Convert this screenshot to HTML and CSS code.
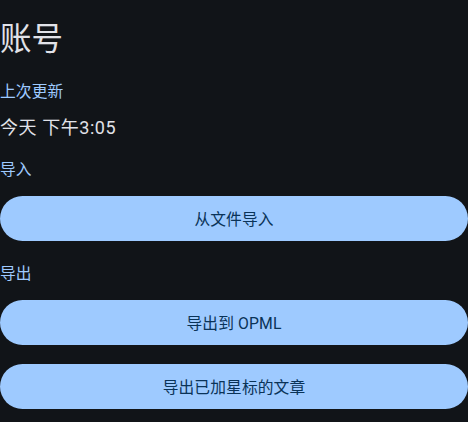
FILE: index.html
```html
<!DOCTYPE html>
<html lang="zh">
<head>
<meta charset="utf-8">
<link rel="stylesheet" href="styles.css">
</head>
<body>
<div class="page">
  <h1 class="title">账号</h1>
  <div class="label label-first">上次更新</div>
  <div class="value">今天 下午3:05</div>
  <div class="label label-import">导入</div>
  <button class="btn">从文件导入</button>
  <div class="label label-export">导出</div>
  <button class="btn">导出到 OPML</button>
  <button class="btn btn-next">导出已加星标的文章</button>
</div>
</body>
</html>
```
FILE: styles.css
```css
html, body {
  margin: 0;
  padding: 0;
  background: #111418;
  height: 100%;
  overflow: hidden;
}
.page {
  display: flex;
  flex-direction: column;
  font-family: Roboto, "Noto Sans CJK SC", sans-serif;
  color: #e1e2e8;
}
.title {
  margin: 20px 0 0;
  font-size: 31.5px;
  font-weight: 400;
  line-height: 40px;
}
.label {
  color: #9ecaff;
  font-size: 15.75px;
  line-height: 20px;
  letter-spacing: 0.1px;
}
.label-first { margin-top: 22px; }
.label-import { margin-top: 20px; }
.label-export { margin-top: 23px; }
.value {
  font-size: 18px;
  line-height: 24px;
  letter-spacing: 0.56px;
  margin-top: 14px;
}
.btn {
  margin-top: 16px;
  height: 45px;
  border: none;
  border-radius: 23px;
  background: #9ecaff;
  color: #0a3358;
  font-family: Roboto, "Noto Sans CJK SC", sans-serif;
  font-size: 15.75px;
  font-weight: 400;
  letter-spacing: 0.1px;
  padding: 0;
}
.btn-next {
  margin-top: 19px;
}
```
